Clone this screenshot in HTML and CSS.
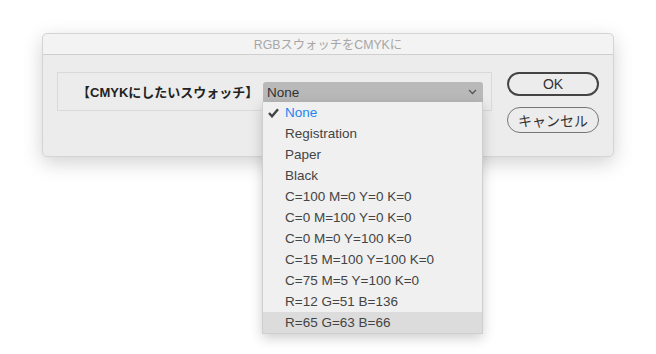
FILE: index.html
```html
<!DOCTYPE html>
<html lang="ja">
<head>
    <meta charset="UTF-8">
    <title>RGBスウォッチをCMYKに</title>
    <link rel="stylesheet" href="styles.css">
</head>
<body>
    <div class="dialog">
        <div class="titlebar">RGBスウォッチをCMYKに</div>
        <div class="content">
            <div class="group">
                <span class="label">【CMYKにしたいスウォッチ】</span>
                <div class="select">
                    <span>None</span>
                    <svg class="chevron" width="9" height="6" viewBox="0 0 9 6">
                        <polyline points="1,1 4.5,4.5 8,1" fill="none" stroke="#555" stroke-width="1.3"/>
                    </svg>
                </div>
            </div>
            <div class="buttons">
                <button class="btn ok">OK</button>
                <button class="btn">キャンセル</button>
            </div>
        </div>
    </div>

    <!-- popup list of the select, open -->
    <ul class="menu">
        <li class="checked">
            <svg class="check" width="11" height="10" viewBox="0 0 11 10">
                <polyline points="1,5 4,8.3 10,1.2" fill="none" stroke="#444" stroke-width="2.4"/>
            </svg>
            None
        </li>
        <li>Registration</li>
        <li>Paper</li>
        <li>Black</li>
        <li>C=100 M=0 Y=0 K=0</li>
        <li>C=0 M=100 Y=0 K=0</li>
        <li>C=0 M=0 Y=100 K=0</li>
        <li>C=15 M=100 Y=100 K=0</li>
        <li>C=75 M=5 Y=100 K=0</li>
        <li>R=12 G=51 B=136</li>
        <li class="hover">R=65 G=63 B=66</li>
    </ul>
</body>
</html>
```

FILE: styles.css
```css
html, body {
    height: 100%;
}

body {
    margin: 0;
    position: relative;
    background: #fff;
    font-family: "Liberation Sans", "Noto Sans CJK JP", sans-serif;
    color: #333;
}

.dialog {
    width: 572px;
    height: 124px;
    margin: 0 0 0 42px;
    position: relative;
    top: 33px;
    box-sizing: border-box;
    background: #ececec;
    border: 1px solid #d4d4d4;
    border-radius: 5px;
    box-shadow: 0 6px 20px rgba(0, 0, 0, 0.18);
}

.titlebar {
    height: 20px;
    line-height: 22px;
    text-align: center;
    font-size: 12.3px;
    color: #a6a6a6;
    background: #f3f3f3;
    border-bottom: 1px solid #cfcfcf;
    border-radius: 5px 5px 0 0;
}

.content {
    display: flex;
    padding: 17px 0 0 14px;
    gap: 15px;
}

.group {
    width: 435px;
    height: 39px;
    box-sizing: border-box;
    border: 1px solid #d9d9d9;
    display: flex;
    align-items: center;
    padding-left: 19px;
}

.label {
    font-size: 13px;
    font-weight: bold;
    color: #222;
    width: 186px;
}

.select {
    width: 220px;
    height: 21px;
    margin-top: 1px;
    background: #b9b9b9;
    border-radius: 3px 3px 0 0;
    display: flex;
    align-items: center;
    justify-content: space-between;
    padding: 0 6px 0 4px;
    box-sizing: border-box;
    font-size: 13.5px;
    color: #333;
}

.menu {
    position: absolute;
    top: 102px;
    left: 262px;
    width: 221px;
    margin: 0;
    padding: 0;
    list-style: none;
    font-size: 13.5px;
    background: #f0f0f0;
    border: 1px solid #cfcfcf;
    border-top: none;
    box-sizing: border-box;
    box-shadow: 0 4px 12px rgba(0, 0, 0, 0.2);
}

.menu li {
    height: 21px;
    line-height: 22px;
    padding-left: 22px;
    position: relative;
    color: #444;
}

.menu li.checked {
    color: #1e86f0;
}

.menu li.hover {
    background: #dcdcdc;
}

.check {
    position: absolute;
    left: 5px;
    top: 6px;
}

.buttons {
    display: flex;
    flex-direction: column;
    gap: 11px;
}

.btn {
    width: 92px;
    height: 24px;
    box-sizing: border-box;
    border-radius: 12px;
    border: 1px solid #777;
    background: #ececec;
    font-family: "Liberation Sans", "Noto Sans CJK JP", sans-serif;
    font-size: 14px;
    color: #333;
    padding: 0;
}

.btn.ok {
    border: 2px solid #444;
}

.btn + .btn {
    height: 26px;
    border-radius: 13px;
}
```
